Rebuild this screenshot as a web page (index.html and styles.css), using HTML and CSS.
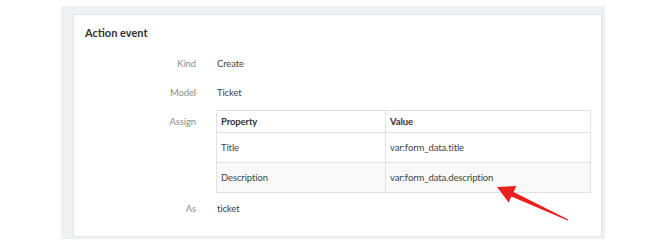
FILE: index.html
```html
<!DOCTYPE html>
<html lang="en">
<head>
    <meta charset="UTF-8">
    <meta name="viewport" content="width=device-width, initial-scale=1.0">
    <title>Action event</title>
    <link rel="stylesheet" href="styles.css">
</head>
<body>
    <div class="panel">
        <div class="card">
            <h2>Action event</h2>
            <div class="fields">
                <div class="field">
                    <div class="label">Kind</div>
                    <div class="value">Create</div>
                </div>
                <div class="field">
                    <div class="label">Model</div>
                    <div class="value">Ticket</div>
                </div>
                <div class="field field-table">
                    <div class="label">Assign</div>
                    <div class="value">
                        <table class="assign">
                            <tr>
                                <th>Property</th>
                                <th>Value</th>
                            </tr>
                            <tr>
                                <td>Title</td>
                                <td>var:form_data.title</td>
                            </tr>
                            <tr class="striped">
                                <td>Description</td>
                                <td>var:form_data.description</td>
                            </tr>
                        </table>
                    </div>
                </div>
                <div class="field">
                    <div class="label">As</div>
                    <div class="value">ticket</div>
                </div>
            </div>
        </div>
    </div>

    <!-- annotation arrow -->
    <svg class="arrow" width="670" height="245" viewBox="0 0 670 245">
        <polygon fill="#e8211d" points="497,187 516.3,186 513.6,191.9 568.3,219.4 567.7,220.6 511.4,196.5 508.7,202.4"/>
    </svg>
</body>
</html>
```

FILE: styles.css
```css
body {
    font-family: Lato, "Open Sans", sans-serif;
    margin: 0;
    background-color: #fff;
    color: #444;
}
.panel {
    margin: 6px 0 0 61px;
    width: 544px;
    height: 233px;
    box-sizing: border-box;
    padding: 8px 3px 2px 12px;
    background-color: #eef0f3;
}
.card {
    height: 100%;
    box-sizing: border-box;
    background-color: #fff;
    border: 1px solid #e2e4e8;
    padding: 10px 10px 0 0;
}
.card h2 {
    margin: 0 0 8px 11px;
    font-size: 11px;
    line-height: 16px;
    font-weight: 700;
    color: #333;
}
.field {
    display: flex;
    padding: 7px 0;
    font-size: 9.5px;
    letter-spacing: -0.12px;
    line-height: 15px;
}
.field-table {
    padding: 3px 0 1px;
}
.label {
    width: 122px;
    text-align: right;
    color: #8c8c8c;
    margin-right: 20px;
}
.field-table .label {
    padding-top: 4px;
}
.value {
    flex: 1;
    padding-left: 1px;
}
.field-table .value {
    padding-left: 0;
}
.assign {
    width: 100%;
    border-collapse: collapse;
    font-size: 9.5px;
    line-height: 15px;
}
.assign th,
.assign td {
    border: 1px solid #e0e2e5;
    text-align: left;
    padding: 7px 4px;
}
.assign th {
    padding-top: 3px;
    padding-bottom: 3px;
    color: #333;
    font-weight: 700;
}
.assign th:first-child,
.assign td:first-child {
    width: 160px;
}
.assign .striped {
    background-color: #f9f9f9;
}
.arrow {
    position: absolute;
    left: 0;
    top: 0;
}
```
